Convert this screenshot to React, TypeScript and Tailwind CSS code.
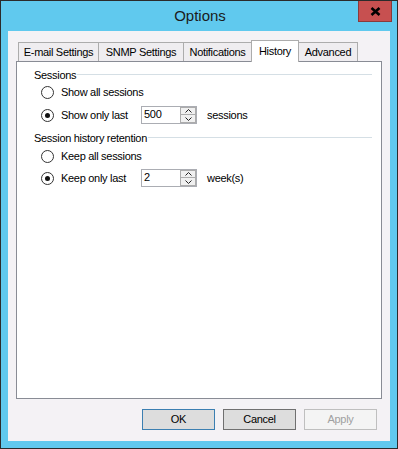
import React from "react";

function Radio({ checked }: { checked?: boolean }) {
  return (
    <span className="w-[13px] h-[13px] rounded-full border border-[#333333] bg-white flex items-center justify-center shrink-0">
      {checked && <span className="w-[5px] h-[5px] rounded-full bg-[#111111]" />}
    </span>
  );
}

function Chevron({ up }: { up?: boolean }) {
  return (
    <svg width="7" height="4" viewBox="0 0 7 4">
      <path
        d={up ? "M0.5 3.5 L3.5 0.5 L6.5 3.5" : "M0.5 0.5 L3.5 3.5 L6.5 0.5"}
        fill="none"
        stroke="#222"
        strokeWidth="1"
      />
    </svg>
  );
}

function Spin({ value }: { value: string }) {
  return (
    <div className="w-[56px] h-[18px] border border-[#abadb3] bg-white flex shrink-0">
      <div className="flex-1 pl-[2px] pt-[1px] leading-[13px]">{value}</div>
      <div className="w-[16px] flex flex-col">
        <div className="h-[8px] border border-[#acacac] bg-[#f0f0f0] flex items-center justify-center">
          <Chevron up />
        </div>
        <div className="flex-1 border border-t-0 border-[#acacac] bg-[#f0f0f0] flex items-center justify-center">
          <Chevron />
        </div>
      </div>
    </div>
  );
}

function Tab({ label, w, selected }: { label: string; w: number; selected?: boolean }) {
  const base = "flex justify-center border border-b-0 -ml-px first:ml-0 shrink-0";
  if (selected)
    return (
      <div
        className={base + " h-[22px] -mb-px bg-white border-[#acacac] relative z-10 items-start pt-[2px]"}
        style={{ width: w }}
      >
        {label}
      </div>
    );
  return (
    <div className={base + " h-[19px] bg-[#efedf0] border-[#acacac] items-center"} style={{ width: w }}>
      {label}
    </div>
  );
}

function Header({ label }: { label: string }) {
  return (
    <div className="h-[14px] flex items-center">
      <span>{label}</span>
      <div className="flex-1 h-px bg-[#d5dfe5] ml-[1px] mr-[9px] -mt-[1px]" />
    </div>
  );
}

function Btn({ label, kind }: { label: string; kind: "def" | "norm" | "dis" }) {
  const cls =
    kind === "def"
      ? "border-[#3c7fb1] bg-[#dddddd] text-black"
      : kind === "norm"
      ? "border-[#707070] bg-[#dddddd] text-black"
      : "border-[#bfbfbf] bg-[#f4f4f4] text-[#a0a0a0]";
  return (
    <div className={"w-[73px] h-[21px] border flex items-center justify-center " + cls}>{label}</div>
  );
}

export default function App() {
  return (
    <div className="w-[398px] h-[449px] border border-[#2b2b2b] bg-[#60c9ee] flex flex-col font-['Liberation_Sans',Arial,sans-serif] text-[11px] tracking-[-0.3px] text-black">
      <div className="h-[30px] relative flex items-center justify-center shrink-0">
        <span className="text-[15px] tracking-normal text-[#1b1b1b] pl-[2px]">Options</span>
        <div className="absolute top-0 right-[5px] w-[34px] h-[21px] bg-[#c75050] border border-[#8a3a3a] border-t-0 flex items-center justify-center">
          <svg width="11" height="9" viewBox="0 0 11 9">
            <path d="M1.5 1 L9.5 8 M9.5 1 L1.5 8" stroke="#000" strokeWidth="2.6" />
          </svg>
        </div>
      </div>
      <div className="mx-[7px] mb-[7px] flex-1 bg-[#f4f2f5] flex flex-col px-[8px]">
        <div className="pt-[9px] pl-[2px] flex items-end">
          <Tab label="E-mail Settings" w={81} />
          <Tab label="SNMP Settings" w={86} />
          <Tab label="Notifications" w={69} />
          <Tab label="History" w={48} selected />
          <Tab label="Advanced" w={60} />
        </div>
        <div className="h-[338px] border border-[#898c95] bg-white flex flex-col pl-[17px] pt-[6px]">
          <Header label="Sessions" />
          <div className="h-[14px] mt-[3px] pl-[7px] flex items-center">
            <Radio />
            <span className="ml-[7px]">Show all sessions</span>
          </div>
          <div className="h-[18px] mt-[7px] pl-[7px] flex items-center">
            <Radio checked />
            <span className="ml-[7px] w-[80px]">Show only last</span>
            <Spin value="500" />
            <span className="ml-[10px]">sessions</span>
          </div>
          <div className="mt-[7px]">
            <Header label="Session history retention" />
          </div>
          <div className="h-[14px] mt-[4px] pl-[7px] flex items-center">
            <Radio />
            <span className="ml-[7px]">Keep all sessions</span>
          </div>
          <div className="h-[18px] mt-[6px] pl-[7px] flex items-center">
            <Radio checked />
            <span className="ml-[7px] w-[80px]">Keep only last</span>
            <Spin value="2" />
            <span className="ml-[10px]">week(s)</span>
          </div>
        </div>
        <div className="mt-[10px] flex justify-end gap-[8px] pr-[5px]">
          <Btn label="OK" kind="def" />
          <Btn label="Cancel" kind="norm" />
          <Btn label="Apply" kind="dis" />
        </div>
      </div>
    </div>
  );
}
